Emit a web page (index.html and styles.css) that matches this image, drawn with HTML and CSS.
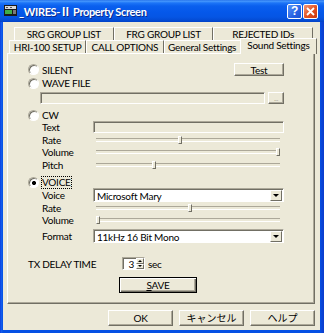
FILE: index.html
```html
<!DOCTYPE html>
<html>
<head>
    <title>_WIRES-Ⅱ Property Screen</title>
    <link rel="stylesheet" href="styles.css">
</head>
<body>
    <div class="window">
        <div class="titlebar">
            <svg class="app-icon" width="13" height="11" viewBox="0 0 13 11">
                <rect x="0" y="0" width="13" height="11" fill="#1b1b1b"/>
                <rect x="1" y="1" width="11" height="3" fill="#d8d8d8"/>
                <rect x="2" y="2" width="2" height="1" fill="#555"/>
                <rect x="6" y="2" width="2" height="1" fill="#555"/>
                <rect x="1" y="5" width="7" height="4" fill="#3fae49"/>
                <rect x="9" y="5" width="3" height="4" fill="#7a7a7a"/>
            </svg>
            <span class="title">_WIRES-Ⅱ Property Screen</span>
            <div class="caption-btns">
                <div class="cap cap-help">?</div>
                <div class="cap cap-close">
                    <svg width="9" height="9" viewBox="0 0 9 9">
                        <path d="M1 1 L8 8 M8 1 L1 8" stroke="#fff" stroke-width="1.8"/>
                    </svg>
                </div>
            </div>
        </div>

        <div class="client">
            <div class="tabs">
                <div class="tab-row back">
                    <div class="tab">SRG GROUP LIST</div>
                    <div class="tab">FRG GROUP LIST</div>
                    <div class="tab">REJECTED IDs</div>
                </div>
                <div class="tab-row front">
                    <div class="tab">HRI-100 SETUP</div>
                    <div class="tab">CALL OPTIONS</div>
                    <div class="tab">General Settings</div>
                    <div class="tab selected">Sound Settings</div>
                </div>
            </div>

            <div class="panel">
                <div class="row r-silent">
                    <span class="radio"></span>
                    <span class="opt">SILENT</span>
                    <div class="btn btn-test">Test</div>
                </div>
                <div class="row r-wave">
                    <span class="radio"></span>
                    <span class="opt">WAVE FILE</span>
                </div>
                <div class="row r-file">
                    <div class="edit edit-file"></div>
                    <div class="btn btn-browse">...</div>
                </div>
                <div class="row r-cw">
                    <span class="radio"></span>
                    <span class="opt">CW</span>
                </div>
                <div class="row r-text">
                    <span class="lbl">Text</span>
                    <div class="edit edit-text"></div>
                </div>
                <div class="row">
                    <span class="lbl">Rate</span>
                    <div class="slider"><span class="thumb" style="left: 82px"></span></div>
                </div>
                <div class="row">
                    <span class="lbl">Volume</span>
                    <div class="slider"><span class="thumb" style="left: 180px"></span></div>
                </div>
                <div class="row r-gap1">
                    <span class="lbl">Pitch</span>
                    <div class="slider"><span class="thumb" style="left: 56px"></span></div>
                </div>
                <div class="row r-voice">
                    <span class="radio checked"></span>
                    <span class="opt focus">VOICE</span>
                </div>
                <div class="row r-combo">
                    <span class="lbl">Voice</span>
                    <div class="combo">
                        <span class="combo-text">Microsoft Mary</span>
                        <span class="combo-btn"></span>
                    </div>
                </div>
                <div class="row">
                    <span class="lbl">Rate</span>
                    <div class="slider"><span class="thumb" style="left: 92px"></span></div>
                </div>
                <div class="row">
                    <span class="lbl">Volume</span>
                    <div class="slider"><span class="thumb" style="left: 0px"></span></div>
                </div>
                <div class="row r-combo r-format">
                    <span class="lbl">Format</span>
                    <div class="combo">
                        <span class="combo-text">11kHz 16 Bit Mono</span>
                        <span class="combo-btn"></span>
                    </div>
                </div>
                <div class="row r-delay">
                    <span class="delay-lbl">TX DELAY TIME</span>
                    <div class="spin">
                        <span class="spin-val">3</span>
                        <span class="spin-btns">
                            <span class="spin-up"></span>
                            <span class="spin-down"></span>
                        </span>
                    </div>
                    <span class="unit">sec</span>
                </div>
                <div class="row r-save">
                    <div class="btn btn-default"><u>S</u>AVE</div>
                </div>
            </div>

            <div class="dialog-buttons">
                <div class="btn btn-dlg">OK</div>
                <div class="btn btn-dlg jp">キャンセル</div>
                <div class="btn btn-dlg jp">ヘルプ</div>
            </div>
        </div>
    </div>
</body>
</html>
```

FILE: styles.css
```css
* {
    box-sizing: border-box;
}
body {
    margin: 0;
    background: #fff;
    font-family: Lato, "Noto Sans CJK JP", sans-serif;
    font-size: 10px;
    letter-spacing: -0.25px;
    color: #000;
}
.window {
    width: 324px;
    height: 333px;
    display: flex;
    flex-direction: column;
    background: linear-gradient(to right, #0831d9 0, #1660ee 1px, #0550e4 3px, #0550e4 320px, #0c3fcf 323px);
}
.titlebar {
    height: 22px;
    display: flex;
    align-items: center;
    padding: 0 6px 0 4px;
    color: #fff;
    background: linear-gradient(to bottom, #1b66e6 0, #4a9bfd 1px, #1c74f7 3px, #0a5fee 6px, #0558ea 12px, #0555e4 17px, #0349d0 21px, #0340c4 22px);
}
.app-icon {
    margin: 0 2px 1px 0;
}
.title {
    flex: 1;
    font-weight: bold;
    font-size: 11px;
    letter-spacing: -0.35px;
    text-shadow: 1px 1px #0a2a8c;
}
.caption-btns {
    display: flex;
    gap: 1px;
    margin-top: 1px;
}
.cap {
    width: 15px;
    height: 15px;
    border: 1px solid #fff;
    border-radius: 2px;
    display: flex;
    align-items: center;
    justify-content: center;
}
.cap-help {
    background: linear-gradient(135deg, #5b96f8, #2762e4 60%, #1d52d0);
    font-family: "Liberation Sans", sans-serif;
    font-weight: bold;
    font-size: 12px;
    line-height: 13px;
}
.cap-close {
    background: linear-gradient(135deg, #f2977a, #e2501f 55%, #c93810);
}

.client {
    flex: 1;
    margin: 0 4px 3px 3px;
    background: #ece9d8;
    display: flex;
    flex-direction: column;
}
.tabs {
    padding-top: 5px;
}
.tab-row {
    display: flex;
    height: 13px;
}
.tab-row.back {
    margin-left: 11px;
    width: 299px;
}
.tab-row.front {
    margin-left: 6px;
    width: 306px;
}
.tab {
    flex: 1;
    text-align: center;
    line-height: 13px;
    border-top: 1px solid #fff;
    border-left: 1px solid #fff;
    border-right: 1px solid #716f64;
    white-space: nowrap;
}
.tab.selected {
    position: relative;
    z-index: 1;
    height: 16px;
    margin: -2px -2px 0 -1px;
    background: #ece9d8;
    line-height: 12px;
}

.panel {
    margin-left: 4px;
    width: 308px;
    height: 251px;
    border: 1px solid;
    border-color: #fff #716f64 #716f64 #fff;
    box-shadow: inset -1px -1px #aca899;
    padding-top: 9px;
}
.row {
    display: flex;
    align-items: center;
    height: 12px;
    line-height: 12px;
    white-space: nowrap;
}
.r-silent {
    height: 13px;
}
.r-wave {
    margin-top: 1px;
}
.r-file {
    margin-top: 3px;
}
.r-cw {
    margin-top: 5px;
}
.r-text {
    margin-bottom: 1px;
}
.r-gap1 {
    margin-top: 1px;
}
.r-voice {
    margin-top: 5px;
}
.r-combo {
    height: 14px;
}
.r-format {
    margin-top: 3px;
}
.r-delay {
    height: 13px;
    margin-top: 14px;
}
.r-save {
    height: 16px;
    margin-top: 7px;
}

.radio {
    width: 11px;
    height: 11px;
    margin-left: 20px;
    border-radius: 50%;
    border: 1px solid;
    border-color: #aca899 #fff #fff #aca899;
    box-shadow: inset 1px 1px #716f64;
    background: #fff;
}
.radio.checked {
    background: radial-gradient(circle at 5px 5px, #000 0, #000 1.6px, #fff 2.4px);
}
.opt {
    margin-left: 3px;
}
.opt.focus {
    outline: 1px dotted #000;
    line-height: 11px;
}
.lbl {
    margin-left: 34px;
    width: 51px;
}
.delay-lbl {
    margin-left: 20px;
    width: 94px;
}

.btn {
    display: flex;
    align-items: center;
    justify-content: center;
    border: 1px solid;
    border-color: #fff #716f64 #716f64 #fff;
    box-shadow: inset -1px -1px #aca899;
    background: #ece9d8;
}
.btn-test {
    margin-left: auto;
    margin-right: 30px;
    width: 50px;
    height: 13px;
}
.btn-browse {
    margin-left: 3px;
    width: 16px;
    height: 12px;
    font-size: 7px;
    color: #aca899;
}
.btn-default {
    margin-left: 111px;
    width: 78px;
    height: 16px;
    border: 1px solid #000;
    box-shadow: inset 1px 1px #fff, inset -1px -1px #716f64, inset -2px -2px #aca899;
}
.btn-dlg {
    width: 65px;
    height: 16px;
}
.jp {
    letter-spacing: 0;
    line-height: 12px;
}

.edit {
    height: 12px;
    border: 1px solid;
    border-color: #aca899 #fff #fff #aca899;
    box-shadow: inset 1px 1px #716f64;
    background: #ece9d8;
}
.edit-file {
    margin-left: 32px;
    width: 225px;
}
.edit-text {
    width: 191px;
}

.slider {
    position: relative;
    width: 184px;
    height: 12px;
    margin-left: 3px;
}
.slider::before {
    content: "";
    position: absolute;
    left: 0;
    right: 0;
    top: 4px;
    height: 2px;
    border-top: 1px solid #aca899;
    border-bottom: 1px solid #fff;
}
.thumb {
    position: absolute;
    top: 2px;
    width: 4px;
    height: 8px;
    border: 1px solid;
    border-color: #fff #716f64 #716f64 #fff;
    background: #ece9d8;
}

.combo {
    display: flex;
    align-items: center;
    width: 191px;
    height: 14px;
    border: 1px solid;
    border-color: #aca899 #fff #fff #aca899;
    box-shadow: inset 1px 1px #716f64;
    background: #fff;
    padding: 1px 1px 0 3px;
}
.combo-text {
    flex: 1;
    line-height: 12px;
}
.combo-btn {
    width: 12px;
    height: 11px;
    border: 1px solid;
    border-color: #fff #716f64 #716f64 #fff;
    background: #ece9d8;
    display: flex;
    align-items: center;
    justify-content: center;
}
.combo-btn::after {
    content: "";
    border-left: 3px solid transparent;
    border-right: 3px solid transparent;
    border-top: 3px solid #000;
}

.spin {
    display: flex;
    width: 23px;
    height: 13px;
    border: 1px solid;
    border-color: #aca899 #fff #fff #aca899;
    box-shadow: inset 1px 1px #716f64;
    background: #fff;
}
.spin-val {
    flex: 1;
    text-align: right;
    padding-right: 2px;
    line-height: 12px;
}
.spin-btns {
    width: 8px;
    display: flex;
    flex-direction: column;
}
.spin-up,
.spin-down {
    flex: 1;
    border: 1px solid;
    border-color: #fff #716f64 #716f64 #fff;
    background: #ece9d8;
    display: flex;
    align-items: center;
    justify-content: center;
}
.spin-up::after {
    content: "";
    border-left: 2px solid transparent;
    border-right: 2px solid transparent;
    border-bottom: 2px solid #000;
}
.spin-down::after {
    content: "";
    border-left: 2px solid transparent;
    border-right: 2px solid transparent;
    border-top: 2px solid #000;
}
.unit {
    margin-left: 3px;
}

.dialog-buttons {
    display: flex;
    gap: 6px;
    margin: 6px 0 0 105px;
}
```
